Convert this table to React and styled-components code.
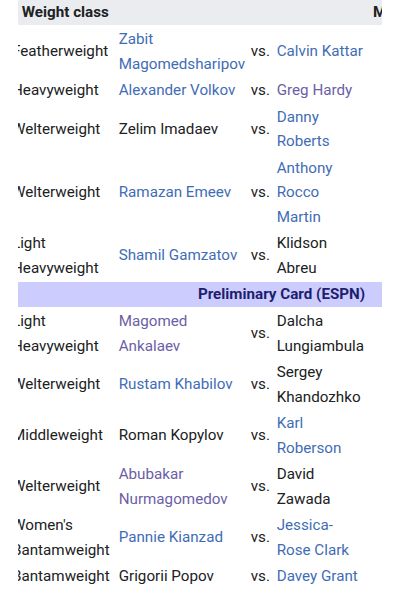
import React from 'react';
import styled, { createGlobalStyle } from 'styled-components';

const GlobalStyle = createGlobalStyle`
  html, body {
    margin: 0;
    padding: 0;
    background: #ffffff;
  }
  body {
    font-family: Roboto, "Noto Sans", "Liberation Sans", sans-serif;
    color: #202122;
    font-size: 15.2px;
  }
`;

const Page = styled.div`
  width: 400px;
  height: 595px;
  overflow: hidden;
  background: #ffffff;
`;

const Scroller = styled.div`
  margin-left: 18px;
  width: 364px;
  overflow: hidden;
`;

const Table = styled.table`
  margin-left: -6px;
  width: 539px;
  table-layout: fixed;
  border-collapse: collapse;
  line-height: 24.5px;
`;

const HeadCell = styled.th`
  height: 25px;
  padding: 0;
  background: #eaecf0;
  border-bottom: 1px solid #ffffff;
  font-weight: 700;
  color: #202122;
  text-align: center;
  white-space: nowrap;
`;

const SectionCell = styled.th`
  height: 25px;
  padding: 0;
  background: #ccccff;
  border-top: 1px solid #ffffff;
  border-bottom: 1px solid #ffffff;
  color: #1d1f6e;
  font-weight: 700;
  text-align: center;
  white-space: nowrap;
`;

const Cell = styled.td`
  padding: 1px 0;
  vertical-align: middle;
  text-align: left;
  color: #202122;
`;

const Vs = styled(Cell)`
  white-space: nowrap;
`;

const Fighter = styled.a`
  text-decoration: none;
  color: ${({ $visited }) => ($visited ? '#6c5ea6' : '#3f6db5')};
`;

const columns = [106.7, 132, 26, 89, 67, 40, 40, 38.3];

const main = [
  { weight: 'Featherweight', a: 'Zabit Magomedsharipov', aLink: 1, b: 'Calvin Kattar', bLink: 1 },
  { weight: 'Heavyweight', a: 'Alexander Volkov', aLink: 1, b: 'Greg Hardy', bLink: 2 },
  { weight: 'Welterweight', a: 'Zelim Imadaev', aLink: 0, b: 'Danny Roberts', bLink: 1 },
  { weight: 'Welterweight', a: 'Ramazan Emeev', aLink: 1, b: 'Anthony Rocco Martin', bLink: 1 },
  { weight: 'Light Heavyweight', a: 'Shamil Gamzatov', aLink: 1, b: 'Klidson Abreu', bLink: 0 },
];

const prelims = [
  { weight: 'Light Heavyweight', a: 'Magomed Ankalaev', aLink: 2, b: 'Dalcha Lungiambula', bLink: 0 },
  { weight: 'Welterweight', a: 'Rustam Khabilov', aLink: 1, b: 'Sergey Khandozhko', bLink: 0 },
  { weight: 'Middleweight', a: 'Roman Kopylov', aLink: 0, b: 'Karl Roberson', bLink: 1 },
  { weight: 'Welterweight', a: 'Abubakar Nurmagomedov', aLink: 2, b: 'David Zawada', bLink: 0 },
  { weight: "Women's Bantamweight", a: 'Pannie Kianzad', aLink: 1, b: 'Jessica-Rose Clark', bLink: 1 },
  { weight: 'Bantamweight', a: 'Grigorii Popov', aLink: 0, b: 'Davey Grant', bLink: 1 },
];

const Name = ({ text, link }) =>
  link ? (
    <Fighter href="#" $visited={link === 2}>
      {text}
    </Fighter>
  ) : (
    text
  );

const Bout = ({ bout }) => (
  <tr>
    <Cell>{bout.weight}</Cell>
    <Cell>
      <Name text={bout.a} link={bout.aLink} />
    </Cell>
    <Vs>vs.</Vs>
    <Cell>
      <Name text={bout.b} link={bout.bLink} />
    </Cell>
  </tr>
);

export default function App() {
  return (
    <Page>
      <GlobalStyle />
      <Scroller>
        <Table>
          <colgroup>
            {columns.map((w, i) => (
              <col key={i} style={{ width: w }} />
            ))}
          </colgroup>
          <thead>
            <tr>
              <HeadCell>Weight class</HeadCell>
              <HeadCell />
              <HeadCell />
              <HeadCell />
              <HeadCell>Method</HeadCell>
              <HeadCell>Round</HeadCell>
              <HeadCell>Time</HeadCell>
              <HeadCell>Notes</HeadCell>
            </tr>
          </thead>
          <tbody>
            {main.map((b, i) => (
              <Bout key={i} bout={b} />
            ))}
            <tr>
              <SectionCell colSpan={8}>Preliminary Card (ESPN)</SectionCell>
            </tr>
            {prelims.map((b, i) => (
              <Bout key={i} bout={b} />
            ))}
          </tbody>
        </Table>
      </Scroller>
    </Page>
  );
}
